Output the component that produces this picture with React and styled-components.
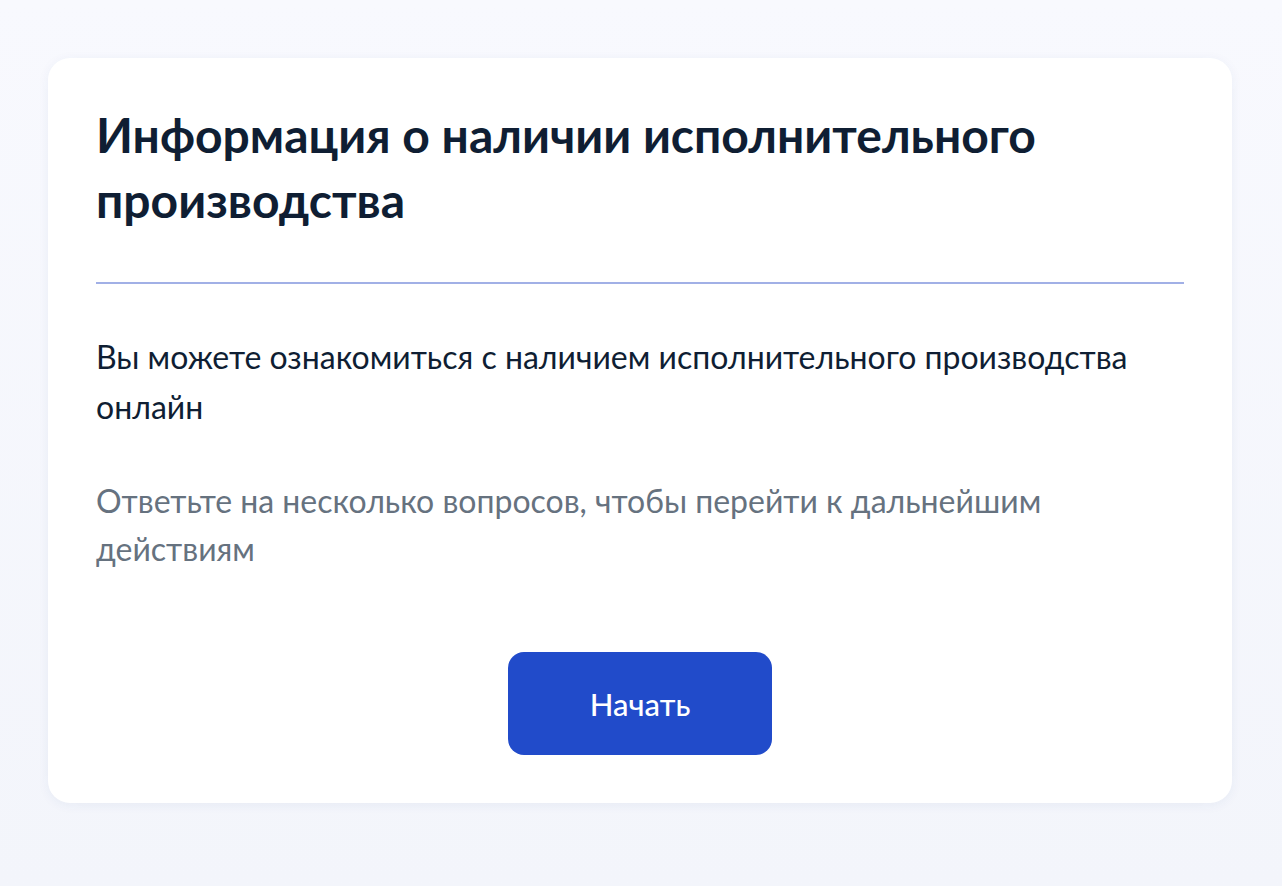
import React from 'react';
import styled, { createGlobalStyle } from 'styled-components';

const GlobalStyle = createGlobalStyle`
  html, body {
    margin: 0;
    padding: 0;
  }
  body {
    font-family: Lato, "Noto Sans", sans-serif;
    background: linear-gradient(180deg, #f8f9fe 0%, #f3f5fb 100%);
    min-height: 886px;
  }
`;

const Page = styled.div`
  padding: 58px 50px 80px 48px;
`;

const Card = styled.section`
  background: #ffffff;
  border-radius: 22px;
  padding: 44px 48px 48px;
  box-shadow: 0 2px 12px rgba(30, 60, 140, 0.06);
`;

const Title = styled.h1`
  margin: 0;
  font-size: 48px;
  line-height: 65px;
  font-weight: 700;
  color: #0f1e33;
  max-width: 980px;
`;

const Divider = styled.hr`
  margin: 50px 0 48px;
  border: 0;
  height: 2px;
  background: #a1b0e6;
`;

const Text = styled.p`
  margin: 0 0 45px;
  font-size: 32px;
  line-height: ${(p) => (p.muted ? '48px' : '50px')};
  color: ${(p) => (p.muted ? '#66727f' : '#0f1e33')};
  max-width: ${(p) => (p.muted ? '1000px' : '1060px')};
`;

const Actions = styled.div`
  display: flex;
  justify-content: center;
  padding-top: 34px;
`;

const Button = styled.button`
  width: 264px;
  height: 103px;
  border: 0;
  border-radius: 16px;
  background: #214bca;
  color: #ffffff;
  font-family: Lato, "Noto Sans", sans-serif;
  font-size: 31px;
  font-weight: 500;
  cursor: pointer;
`;

export default function App() {
  return (
    <>
      <GlobalStyle />
      <Page>
        <Card>
          <Title>Информация о наличии исполнительного производства</Title>
          <Divider />
          <Text>Вы можете ознакомиться с наличием исполнительного производства онлайн</Text>
          <Text muted>Ответьте на несколько вопросов, чтобы перейти к дальнейшим действиям</Text>
          <Actions>
            <Button>Начать</Button>
          </Actions>
        </Card>
      </Page>
    </>
  );
}
